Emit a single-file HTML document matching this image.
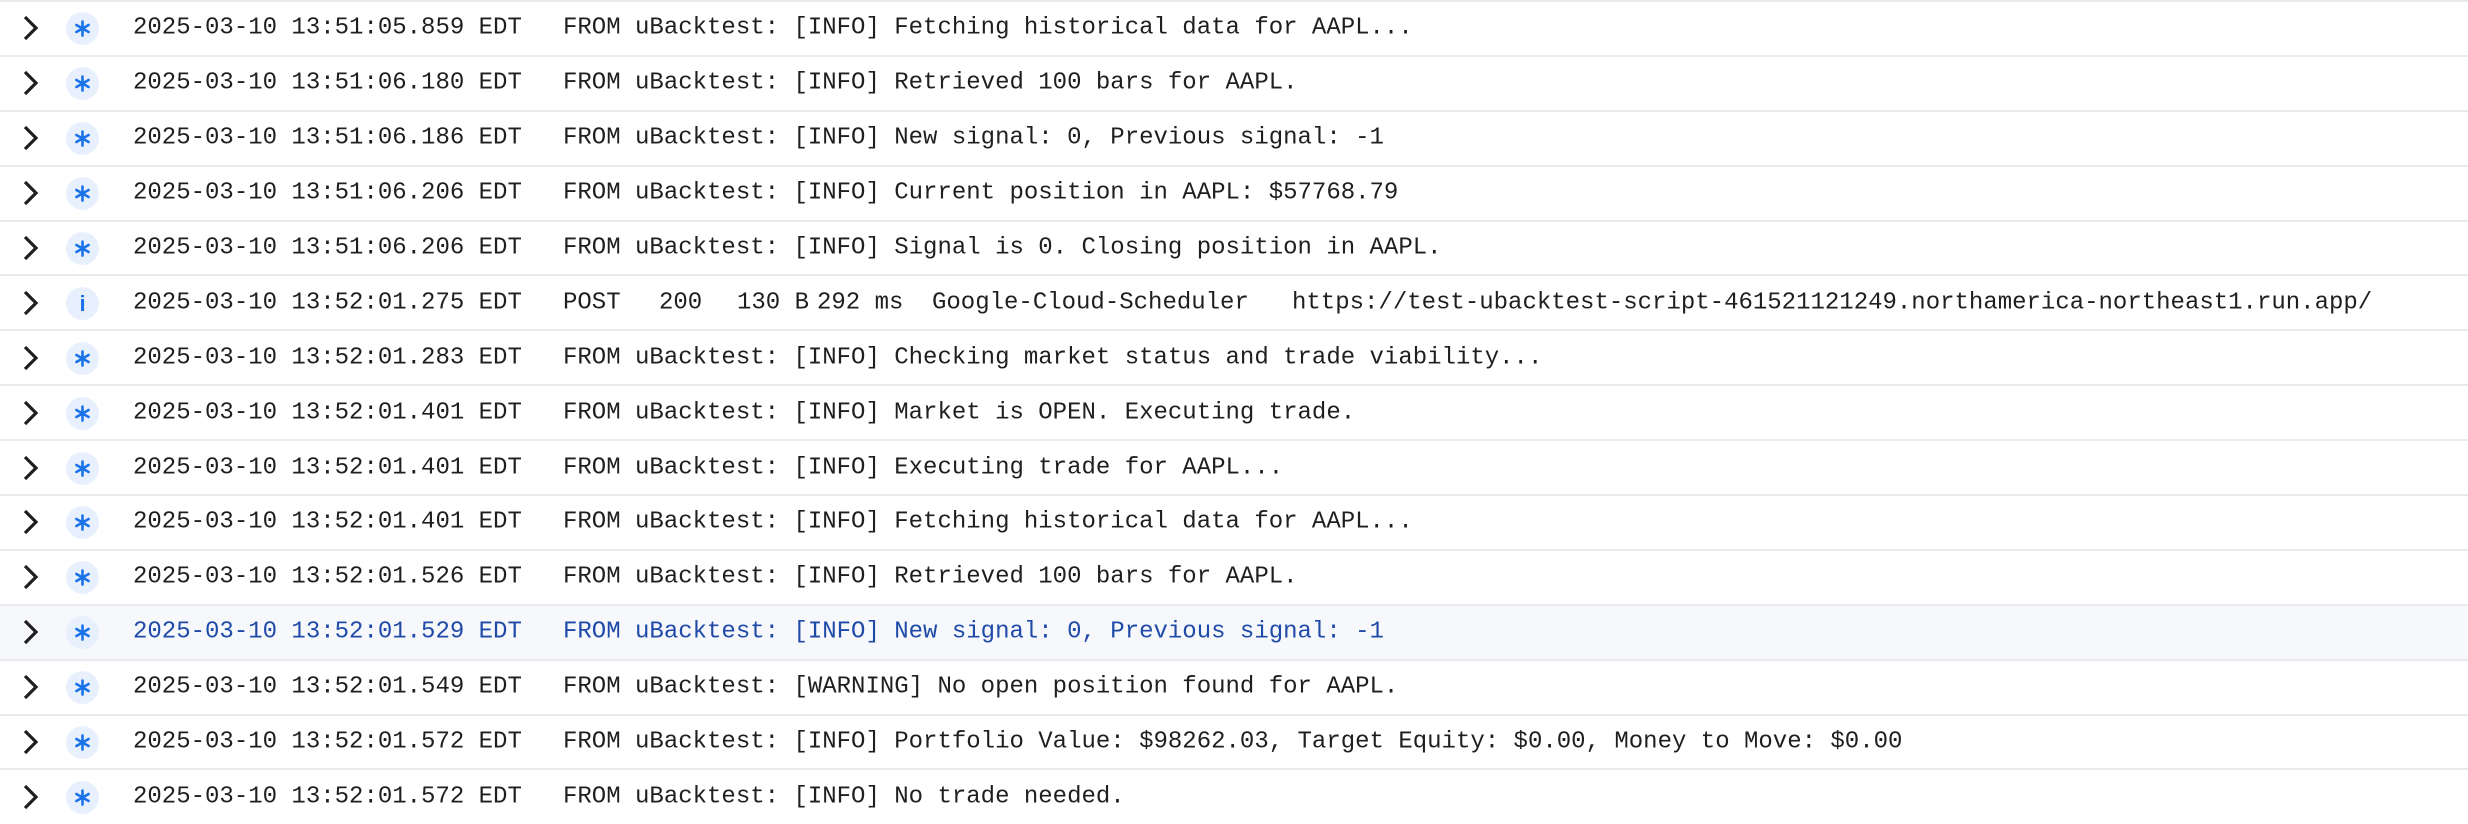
<!DOCTYPE html>
<html><head><meta charset="utf-8"><style>
html,body{margin:0;padding:0;background:#fff;width:2468px;height:824px;overflow:hidden}
.row{position:relative;height:52.9px;border-top:2px solid #e8eaed;font-family:"Liberation Mono",monospace;font-size:24px;color:#1f1f1f}
.row.hl{background:#f6f8fc;color:#1f4aa8}
.row span{position:absolute;top:50%;transform:translateY(-50%);white-space:pre}
.chev{position:absolute;left:21px;top:50%;margin-top:-13px;width:18px;height:26px}
.ic{position:absolute;left:66px;top:50%;margin-top:-16px;width:33px;height:33px;border-radius:50%;background:#e8f0fe}
.ic svg{position:absolute;left:8px;top:8px;width:17px;height:17px}
.ic.i{color:#1a73e8;text-align:center;font-family:"Liberation Sans",sans-serif;font-weight:bold;line-height:33px;font-size:22px}
.ts{left:133px}.msg{left:563px}
</style></head><body>
<div id="rows"></div>
<script>
const rows=[
["2025-03-10 13:51:05.859 EDT","FROM uBacktest: [INFO] Fetching historical data for AAPL..."],
["2025-03-10 13:51:06.180 EDT","FROM uBacktest: [INFO] Retrieved 100 bars for AAPL."],
["2025-03-10 13:51:06.186 EDT","FROM uBacktest: [INFO] New signal: 0, Previous signal: -1"],
["2025-03-10 13:51:06.206 EDT","FROM uBacktest: [INFO] Current position in AAPL: $57768.79"],
["2025-03-10 13:51:06.206 EDT","FROM uBacktest: [INFO] Signal is 0. Closing position in AAPL."],
["2025-03-10 13:52:01.275 EDT",null],
["2025-03-10 13:52:01.283 EDT","FROM uBacktest: [INFO] Checking market status and trade viability..."],
["2025-03-10 13:52:01.401 EDT","FROM uBacktest: [INFO] Market is OPEN. Executing trade."],
["2025-03-10 13:52:01.401 EDT","FROM uBacktest: [INFO] Executing trade for AAPL..."],
["2025-03-10 13:52:01.401 EDT","FROM uBacktest: [INFO] Fetching historical data for AAPL..."],
["2025-03-10 13:52:01.526 EDT","FROM uBacktest: [INFO] Retrieved 100 bars for AAPL."],
["2025-03-10 13:52:01.529 EDT","FROM uBacktest: [INFO] New signal: 0, Previous signal: -1"],
["2025-03-10 13:52:01.549 EDT","FROM uBacktest: [WARNING] No open position found for AAPL."],
["2025-03-10 13:52:01.572 EDT","FROM uBacktest: [INFO] Portfolio Value: $98262.03, Target Equity: $0.00, Money to Move: $0.00"],
["2025-03-10 13:52:01.572 EDT","FROM uBacktest: [INFO] No trade needed."]];
let h='';
const star='<svg viewBox="0 0 17 17"><g stroke="#1a73e8" stroke-width="2.6" stroke-linecap="round"><path d="M8.5 1.5V15.5"/><path d="M2.4 5L14.6 12"/><path d="M2.4 12L14.6 5"/></g></svg>';
rows.forEach((r,i)=>{
 const chev='<svg class="chev" viewBox="0 0 18 26"><path d="M4 2 L15 13 L4 24" fill="none" stroke="#1f1f1f" stroke-width="3.2"/></svg>';
 const ic=r[1]===null?'<div class="ic i">i</div>':'<div class="ic">'+star+'</div>';
 let m;
 if(r[1]===null){
  m='<span style="left:563px">POST</span><span style="left:659px">200</span><span style="left:737px">130 B</span><span style="left:817px">292 ms</span><span style="left:932px">Google-Cloud-Scheduler</span><span style="left:1292px">https://test-ubacktest-script-461521121249.northamerica-northeast1.run.app/</span>';
 } else m='<span class="msg">'+r[1]+'</span>';
 h+='<div class="row'+(i==11?' hl':'')+'">'+chev+ic+'<span class="ts">'+r[0]+'</span>'+m+'</div>';
});
document.getElementById('rows').innerHTML=h;
</script>
</body></html>
